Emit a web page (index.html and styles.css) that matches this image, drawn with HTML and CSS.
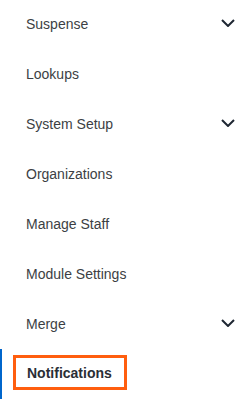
FILE: index.html
```html
<!DOCTYPE html>
<html lang="en">
<head>
<meta charset="utf-8">
<link rel="stylesheet" href="styles.css">
</head>
<body>
<nav class="nav">
  <ul class="nav-list">
    <li class="nav-item"><span class="nav-text">Suspense</span><svg class="chev" viewBox="0 0 14 8" width="14" height="8"><path d="M1 1 L7 7 L13 1" fill="none" stroke="#1f2733" stroke-width="2"/></svg></li>
    <li class="nav-item"><span class="nav-text">Lookups</span></li>
    <li class="nav-item"><span class="nav-text">System Setup</span><svg class="chev" viewBox="0 0 14 8" width="14" height="8"><path d="M1 1 L7 7 L13 1" fill="none" stroke="#1f2733" stroke-width="2"/></svg></li>
    <li class="nav-item"><span class="nav-text">Organizations</span></li>
    <li class="nav-item"><span class="nav-text">Manage Staff</span></li>
    <li class="nav-item"><span class="nav-text">Module Settings</span></li>
    <li class="nav-item"><span class="nav-text">Merge</span><svg class="chev" viewBox="0 0 14 8" width="14" height="8"><path d="M1 1 L7 7 L13 1" fill="none" stroke="#1f2733" stroke-width="2"/></svg></li>
    <li class="nav-item current"><span class="nav-focus">Notifications</span></li>
  </ul>
</nav>
</body>
</html>
```
FILE: styles.css
```css
html, body {
  margin: 0;
  padding: 0;
  background: #ffffff;
}
body {
  font-family: "Liberation Sans", Arial, sans-serif;
  font-size: 14px;
  color: #3c3f44;
}
.nav-list {
  list-style: none;
  margin: -1px 0 0 0;
  padding: 0;
}
.nav-item {
  height: 50px;
  display: flex;
  align-items: center;
  justify-content: space-between;
  padding: 0 7px 0 26px;
  box-sizing: border-box;
}
.chev {
  display: block;
  margin-bottom: 2px;
}
.nav-item.current {
  border-left: 2px solid #0066cc;
  padding-left: 11px;
}
.nav-focus {
  display: flex;
  align-items: center;
  box-sizing: border-box;
  width: 114px;
  height: 35px;
  margin-top: -3px;
  border: 3px solid #ff5e0e;
  padding-left: 11px;
  font-weight: bold;
  color: #2a2e35;
}
```
